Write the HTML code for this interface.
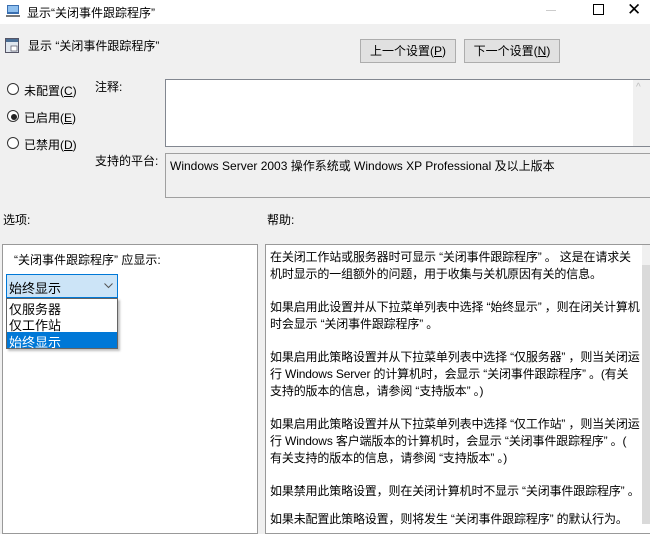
<!DOCTYPE html>
<html><head><meta charset="utf-8"><style>
*{margin:0;padding:0;box-sizing:border-box}
body{width:650px;height:524px;overflow:hidden;background:#f0f0f0;position:relative;font-family:"Liberation Sans","Noto Sans CJK SC",sans-serif;font-size:12px;color:#000}
.a{position:absolute;white-space:nowrap}
.btn{position:absolute;background:#e1e1e1;border:1px solid #adadad;height:24px;top:39px;text-align:center;line-height:22px}
.box{position:absolute;background:#fff;border:1px solid #828790}
.radio{position:absolute;width:12px;height:12px;border:1px solid #333;border-radius:50%;background:#fff}
.h{position:absolute;left:270px;white-space:nowrap;font-size:12px;letter-spacing:-0.15px}
</style></head><body>
<div class="a" style="left:0;top:0;width:650px;height:24px;background:#fff"></div>
<svg class="a" style="left:6px;top:4px" width="14" height="14"><rect x="1" y="1" width="12" height="9" fill="#3a6fb0"/><rect x="2" y="2" width="10" height="6" fill="#8fc0ef"/><rect x="0" y="11" width="14" height="2" fill="#777"/></svg>
<div class="a" style="left:27px;top:4px">显示“关闭事件跟踪程序”</div>
<div class="a" style="left:546px;top:10px;width:10px;height:1px;background:#ccc"></div>
<div class="a" style="left:593px;top:4px;width:11px;height:11px;border:1px solid #000"></div>
<div class="a" style="left:627px;top:0px;font-size:17px;line-height:20px">✕</div>
<svg class="a" style="left:5px;top:38px" width="14" height="15"><rect x="0.5" y="0.5" width="13" height="14" fill="#dfe6ee" stroke="#556"/><rect x="1" y="1" width="12" height="3" fill="#4a6d94"/><rect x="6" y="8" width="6" height="5" fill="#fff" stroke="#556" stroke-width=".7"/></svg>
<div class="a" style="left:28px;top:37px">显示 “关闭事件跟踪程序”</div>
<div class="btn" style="left:360px;width:96px">上一个设置(<u>P</u>)</div>
<div class="btn" style="left:464px;width:96px">下一个设置(<u>N</u>)</div>
<div class="radio" style="left:7px;top:83px"></div><div class="a" style="left:24px;top:82px">未配置(<u>C</u>)</div>
<div class="radio" style="left:7px;top:110px"></div><div class="a" style="left:11px;top:114px;width:6px;height:6px;border-radius:50%;background:#222"></div><div class="a" style="left:24px;top:109px">已启用(<u>E</u>)</div>
<div class="radio" style="left:7px;top:137px"></div><div class="a" style="left:24px;top:136px">已禁用(<u>D</u>)</div>
<div class="a" style="left:95px;top:78px">注释:</div>
<div class="a" style="left:95px;top:152px">支持的平台:</div>
<div class="box" style="left:165px;top:79px;width:490px;height:68px"></div>
<div class="a" style="left:633px;top:80px;width:17px;height:66px;background:#f0f0f0"></div>
<div class="a" style="left:636px;top:82px;color:#bbb;font-size:10px">^</div>
<div class="box" style="left:165px;top:153px;width:490px;height:45px;background:#f0f0f0;border-color:#a0a0a0"></div>
<div class="a" style="left:170px;top:157px">Windows Server 2003 操作系统或 Windows XP Professional 及以上版本</div>
<div class="a" style="left:3px;top:211px">选项:</div>
<div class="a" style="left:267px;top:211px">帮助:</div>
<div class="box" style="left:2px;top:244px;width:256px;height:290px;border-color:#999"></div>
<div class="a" style="left:14px;top:251px">“关闭事件跟踪程序” 应显示:</div>
<div class="a" style="left:6px;top:274px;width:112px;height:24px;background:#cce4f7;border:1px solid #0078d7"></div>
<div class="a" style="left:9px;top:278px;font-size:13px">始终显示</div>
<svg class="a" style="left:104px;top:283px" width="9" height="6"><path d="M0.5 0.5L4.5 4.5L8.5 0.5" fill="none" stroke="#555"/></svg>
<div class="a" style="left:6px;top:298px;width:112px;height:51px;background:#fff;border:1px solid #646464;box-shadow:2px 2px 2px rgba(0,0,0,.25)"></div>
<div class="a" style="left:7px;top:332px;width:110px;height:16px;background:#0078d7"></div>
<div class="a" style="left:9px;top:299px;font-size:13px">仅服务器</div>
<div class="a" style="left:9px;top:315px;font-size:13px">仅工作站</div>
<div class="a" style="left:9px;top:332px;font-size:13px;color:#fff">始终显示</div>
<div class="box" style="left:265px;top:244px;width:395px;height:290px;border-color:#999"></div>
<div class="a" style="left:642px;top:245px;width:8px;height:279px;background:#f0f0f0"></div>
<div class="a" style="left:642px;top:265px;width:8px;height:259px;background:#dadada"></div>
<div class="h" style="top:248px">在关闭工作站或服务器时可显示 “关闭事件跟踪程序” 。 这是在请求关</div>
<div class="h" style="top:265px">机时显示的一组额外的问题，用于收集与关机原因有关的信息。</div>
<div class="h" style="top:298px">如果启用此设置并从下拉菜单列表中选择 “始终显示” ，则在闭关计算机</div>
<div class="h" style="top:315px">时会显示 “关闭事件跟踪程序” 。</div>
<div class="h" style="top:348px">如果启用此策略设置并从下拉菜单列表中选择 “仅服务器” ，则当关闭运</div>
<div class="h" style="top:365px">行 Windows Server 的计算机时，会显示 “关闭事件跟踪程序” 。(有关</div>
<div class="h" style="top:382px">支持的版本的信息，请参阅 “支持版本” 。)</div>
<div class="h" style="top:415px">如果启用此策略设置并从下拉菜单列表中选择 “仅工作站” ，则当关闭运</div>
<div class="h" style="top:432px">行 Windows 客户端版本的计算机时，会显示 “关闭事件跟踪程序” 。(</div>
<div class="h" style="top:449px">有关支持的版本的信息，请参阅 “支持版本” 。)</div>
<div class="h" style="top:482px">如果禁用此策略设置，则在关闭计算机时不显示 “关闭事件跟踪程序” 。</div>
<div class="h" style="top:510px">如果未配置此策略设置，则将发生 “关闭事件跟踪程序” 的默认行为。</div>
</body></html>
